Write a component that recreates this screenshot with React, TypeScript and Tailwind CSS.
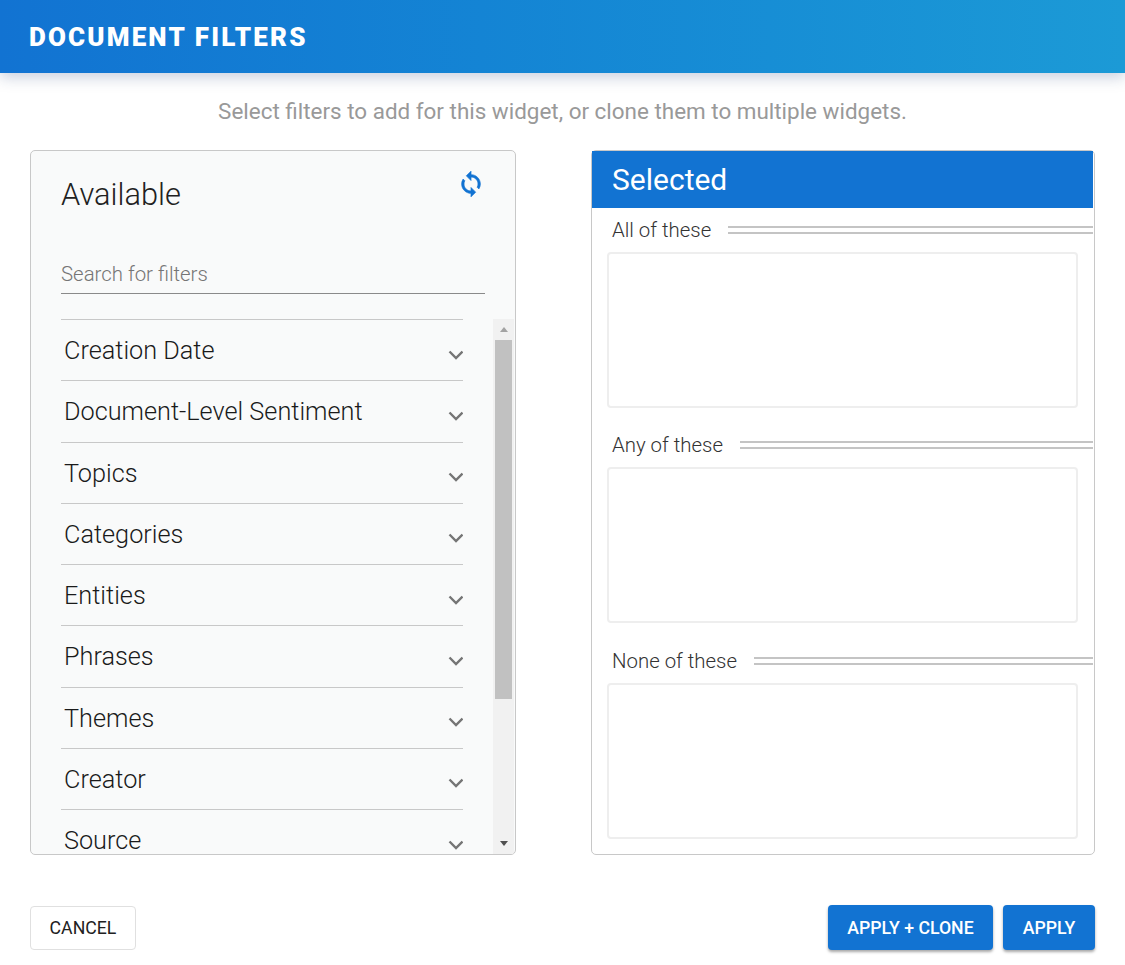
import React from "react";

const filters = ["Creation Date","Document-Level Sentiment","Topics","Categories","Entities","Phrases","Themes","Creator","Source"];

function Chevron() {
  return (
    <svg width="16" height="10" viewBox="0 0 16 10" className="mt-[9px] mr-[-1px] shrink-0">
      <path d="M1.5 1.5 L8 8 L14.5 1.5" fill="none" stroke="#757575" strokeWidth="2.4" />
    </svg>
  );
}

function Section({ label, lineClass }: { label: string; lineClass: string }) {
  return (
    <div className={lineClass}>
      <div className="flex items-center h-[28px]">
        <span className="ml-[20px] text-[20.4px] text-[#333] leading-[28px] [font-weight:300]">{label}</span>
        <div className="flex-1 ml-[17px] h-[8px] border-y-2 border-[#c4c4c4] mt-[-1px]" />
      </div>
      <div className="mt-[8px] ml-[15px] w-[471px] h-[156px] border-2 border-[#eeeeee] rounded-[4px] bg-white" />
    </div>
  );
}

export default function App() {
  return (
    <div className="w-[1125px] h-[965px] bg-white overflow-hidden font-['Roboto',sans-serif] text-[#212121]">
      <header className="relative h-[73px] flex items-center pl-[29px] bg-gradient-to-r from-[#1273d2] to-[#1c9ad6] shadow-[0_4px_14px_rgba(30,60,120,0.25)]">
        <h1 className="text-[26px] font-black text-white tracking-[2.15px] leading-none">DOCUMENT FILTERS</h1>
      </header>
      <p className="h-[77px] pt-[24px] text-center text-[22.45px] leading-[28px] text-[#999999] font-normal">
        Select filters to add for this widget, or clone them to multiple widgets.
      </p>
      <div className="flex justify-between pl-[30px] pr-[30px]">
        <section className="w-[486px] h-[705px] border border-[#c8c8c8] rounded-[5px] bg-[#f9fafa] overflow-hidden flex flex-col">
          <div className="relative pl-[30px] pr-[30px] shrink-0">
            <div className="pt-[24px] text-[30.8px] leading-[40px] font-light text-[#212121]">Available</div>
            <svg viewBox="0 0 24 24" width="28" height="28" className="absolute right-[30px] top-[19px] text-[#1273d2] fill-current stroke-current stroke-[0.6]">
              <path d="M12 4V1L8 5l4 4V6c3.31 0 6 2.69 6 6 0 1.01-.25 1.97-.7 2.8l1.46 1.46C19.54 15.03 20 13.57 20 12c0-4.42-3.58-8-8-8zm0 14c-3.31 0-6-2.69-6-6 0-1.01.25-1.97.7-2.8L5.24 7.74C4.46 8.97 4 10.43 4 12c0 4.42 3.58 8 8 8v3l4-4-4-4v3z" />
            </svg>
            <div className="mt-[45px] h-[34px] border-b border-[#8a8a8a] text-[20.4px] leading-[28px] font-light text-[#757575] mr-0">
              Search for filters
            </div>
          </div>
          <div className="flex flex-1 min-h-0 mt-[25px] pl-[30px] pr-[1px]">
            <ul className="w-[402px] overflow-hidden">
              {filters.map((f) => (
                <li key={f} className="h-[61.25px] border-t border-[#c8c8c8] flex items-center justify-between pl-[3px] pr-[0px]">
                  <span className="text-[25.25px] text-[#1a1a1a] font-light mt-[2px]">{f}</span>
                  <Chevron />
                </li>
              ))}
            </ul>
            <div className="ml-[30px] w-[21px] bg-[#f1f1f1] flex flex-col items-center">
              <div className="h-[21px] flex items-center justify-center">
                <div className="w-0 h-0 border-x-[4px] border-x-transparent border-b-[5px] border-b-[#a3a3a3]" />
              </div>
              <div className="w-[17px] h-[359px] bg-[#c1c1c1]" />
              <div className="flex-1" />
              <div className="h-[21px] flex items-center justify-center">
                <div className="w-0 h-0 border-x-[4px] border-x-transparent border-t-[5px] border-t-[#505050]" />
              </div>
            </div>
          </div>
        </section>
        <section className="w-[504px] h-[705px] border border-[#c8c8c8] rounded-[5px] bg-white">
          <div className="h-[57px] mr-[1px] bg-[#1273d2] flex items-center pl-[20px] text-[30px] text-white font-normal">Selected</div>
          <Section label="All of these" lineClass="mt-[8px] pr-[1px]" />
          <Section label="Any of these" lineClass="mt-[23px] pr-[1px]" />
          <Section label="None of these" lineClass="mt-[24px] pr-[1px]" />
        </section>
      </div>
      <footer className="flex items-center justify-between pl-[30px] pr-[30px] mt-[50px]">
        <button className="w-[106px] h-[44px] pt-[1px] border border-[#e0e0e0] rounded-[4px] bg-white text-[17.7px] font-normal text-[#212121]">CANCEL</button>
        <div className="flex gap-[10px]">
          <button className="w-[165px] h-[45px] pt-[1px] rounded-[4px] bg-[#1273d2] text-white text-[17.7px] font-medium shadow-[0_2px_3px_rgba(0,0,0,0.35)]">APPLY + CLONE</button>
          <button className="w-[92px] h-[45px] pt-[1px] rounded-[4px] bg-[#1273d2] text-white text-[17.7px] font-medium shadow-[0_2px_3px_rgba(0,0,0,0.35)]">APPLY</button>
        </div>
      </footer>
    </div>
  );
}
